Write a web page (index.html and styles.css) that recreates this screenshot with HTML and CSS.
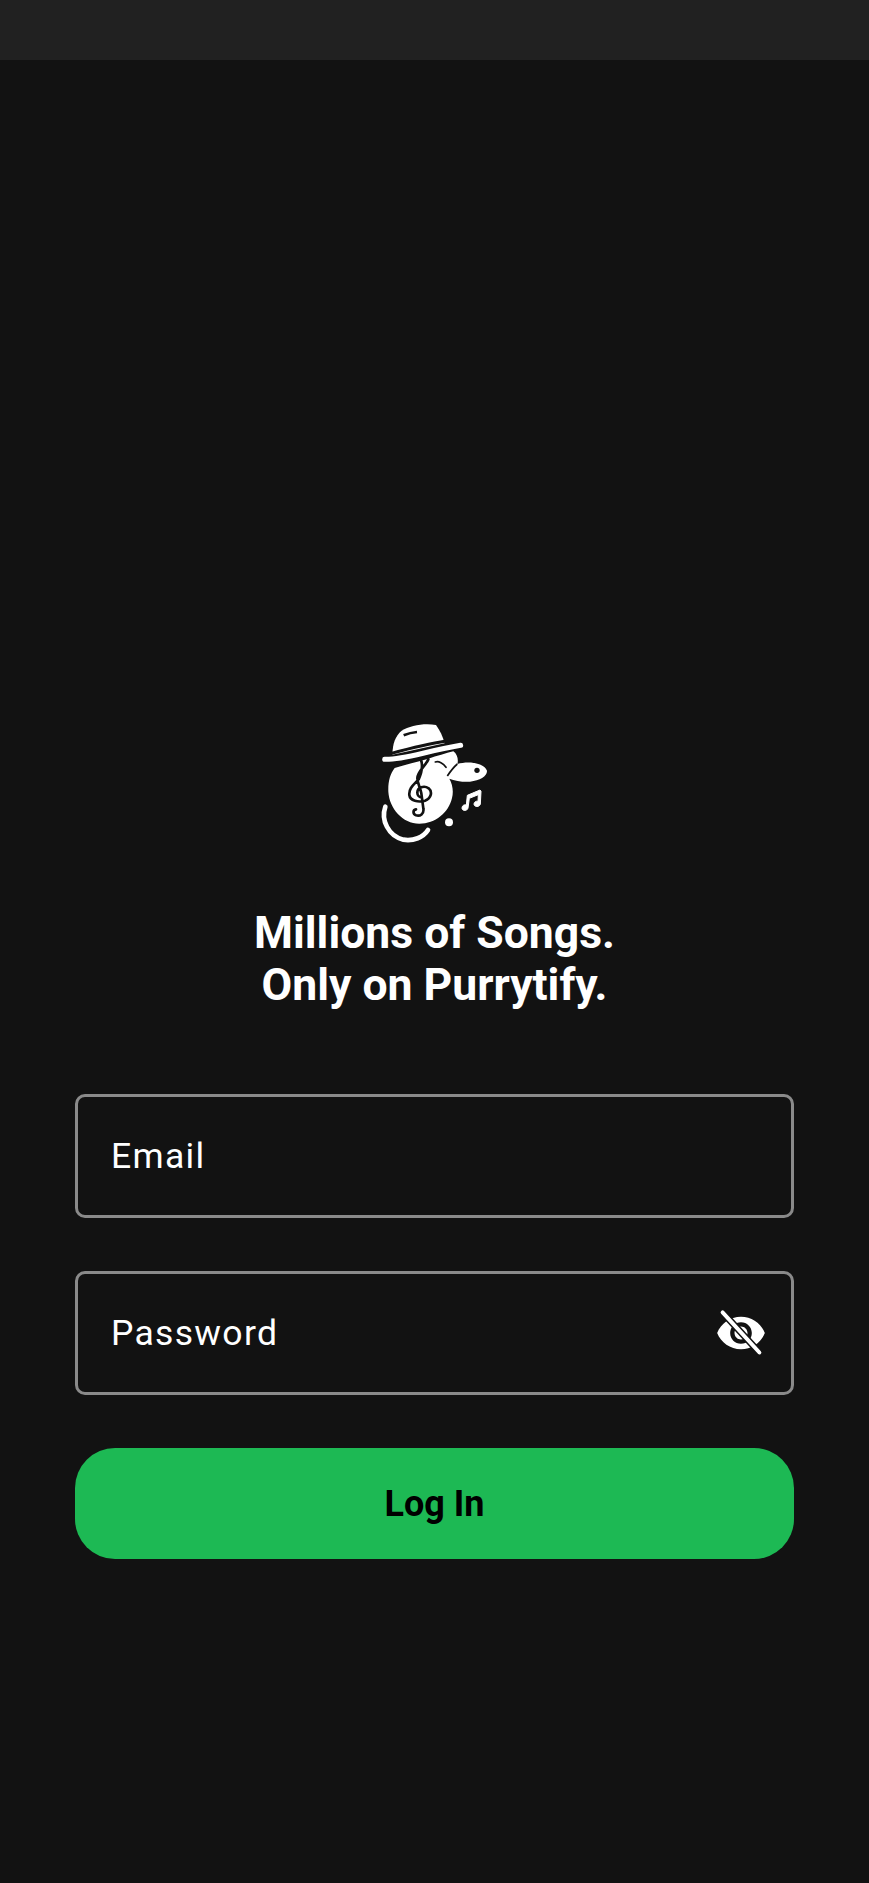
FILE: index.html
```html
<!DOCTYPE html>
<html>
<head>
	<meta charset="utf-8" />
	<title>Purrytify</title>
	<link rel="stylesheet" href="styles.css">
</head>
<body>
<div class="statusbar"></div>
<div class="main">
	<svg class="logo" viewBox="0 0 450 420">
		<!-- hat -->
		<path class="white" d="M97 134C98 100 106 78 125 62C150 46 195 38 228 45C240 62 248 78 254 100Z"/>
		<path class="slit" d="M131 76C145 70 158 67 171 66"/>
		<path class="band" d="M94 130C150 115 200 102 258 93"/>
		<path class="brim" d="M74 148C130 150 195 124 302 106"/>
		<!-- head, beak and body -->
		<path class="white" d="M104 174C135 164 170 156 205 146C230 138 258 130 280 124C292 132 296 150 292 162C325 152 372 158 381 182C382 198 360 212 330 215C310 217 285 212 268 206C278 224 281 244 276 264C266 308 226 341 178 341C128 341 88 295 85 245C84 215 90 192 104 174Z"/>
		<path class="cut" d="M262 198C270 186 278 174 292 162"/>
		<circle class="dark" cx="351" cy="181" r="8"/>
		<path class="eye" d="M226 156C236 152 250 160 258 172"/>
		<!-- treble clef -->
		<path class="clef" d="M205 148C195 170 172 185 172 205C172 218 180 230 184 250L190 295C193 312 180 320 168 316C158 312 158 300 168 298M183 150C190 170 185 188 176 208C160 225 146 235 148 255C150 272 175 278 195 272C214 265 218 245 206 235C192 225 172 232 172 248C172 256 178 262 186 262"/>
		<!-- note, dot, tail -->
		<path class="note" d="M322 256L360 240L363 244L361 282C359 292 342 292 342 282C342 275 350 272 354 274L355 254L328 265L324 294C322 304 306 304 306 294C306 286 314 283 319 285Z"/>
		<circle class="white" cx="267" cy="337" r="12"/>
		<path class="tail" d="M76 290C62 330 85 378 130 389C160 394 190 382 204 360"/>
	</svg>
	<h1 class="title">Millions of Songs.<br>Only on Purrytify.</h1>
	<div class="field"><span>Email</span></div>
	<div class="field"><span>Password</span>
		<svg class="eye-off" viewBox="0 0 24 24">
			<path class="white" d="M12 4.5C7 4.5 2.73 7.61 1 12c1.73 4.39 6 7.5 11 7.5s9.27-3.11 11-7.5c-1.73-4.39-6-7.5-11-7.5zM12 17c-2.76 0-5-2.24-5-5s2.24-5 5-5 5 2.24 5 5-2.24 5-5 5zm0-8c-1.66 0-3 1.34-3 3s1.34 3 3 3 3-1.34 3-3-1.34-3-3-3z"/>
			<path class="slash-bg" d="M3.5 2.5L20.5 21"/>
			<path class="slash" d="M3.5 2.5L20.5 21"/>
		</svg>
	</div>
	<a href="#" class="login">Log In</a>
</div>
</body>
</html>
```

FILE: styles.css
```css
*{
margin:0;
padding:0;
box-sizing:border-box;
}
body{
background:#121212;
font-family:Roboto,"Liberation Sans",sans-serif;
color:#fff;
}
.statusbar{
height:60px;
background:#212121;
}
.main{
display:flex;
flex-direction:column;
align-items:center;
padding:650px 75px 0;
}
.logo{
width:150px;
height:140px;
margin-bottom:57px;
}
.title{
font-size:44.5px;
font-weight:700;
line-height:52px;
text-align:center;
margin-bottom:83px;
}
.field{
width:719px;
height:124px;
border:3px solid #8a8a8a;
border-radius:10px;
display:flex;
align-items:center;
justify-content:space-between;
padding:0 24px 0 33px;
margin-bottom:53px;
font-size:35.5px;
letter-spacing:1.3px;
}
.login{
width:719px;
height:111px;
border-radius:40px;
background:#1db954;
color:#000;
font-size:36px;
font-weight:700;
display:flex;
align-items:center;
justify-content:center;
text-decoration:none;
}
.eye-off{
width:52px;
height:52px;
}
.white{fill:#fff;}
.dark{fill:#121212;}
.slit{fill:none;stroke:#121212;stroke-width:8;}
.band{fill:none;stroke:#121212;stroke-width:9;}
.brim{fill:none;stroke:#fff;stroke-width:15;stroke-linecap:round;}
.cut{fill:none;stroke:#121212;stroke-width:5;}
.eye{fill:none;stroke:#121212;stroke-width:5;stroke-linecap:round;}
.clef{fill:none;stroke:#121212;stroke-width:8;stroke-linecap:round;stroke-linejoin:round;}
.note{fill:#fff;stroke:#fff;stroke-width:3;}
.tail{fill:none;stroke:#fff;stroke-width:14;stroke-linecap:round;}
.slash-bg{fill:none;stroke:#121212;stroke-width:3.2;}
.slash{fill:none;stroke:#fff;stroke-width:1.8;stroke-linecap:round;}
```
